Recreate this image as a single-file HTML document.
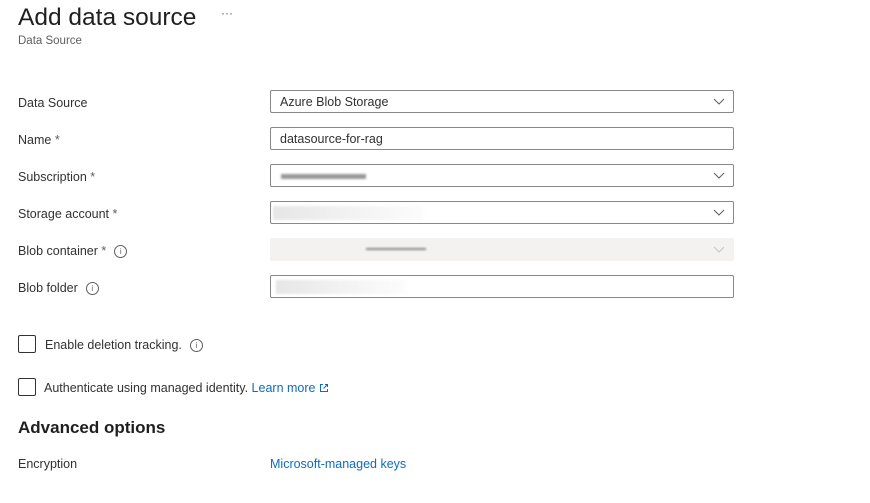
<!DOCTYPE html>
<html><head><meta charset="utf-8"><style>
body{margin:0;width:870px;height:503px;background:#fff;font-family:"Liberation Sans",sans-serif;color:#323130;position:relative;overflow:hidden}
.a{position:absolute;white-space:nowrap}
.lbl{font-size:12.5px;left:18px}
.box{position:absolute;left:270px;width:462px;height:21px;border:1px solid #8a8886;border-radius:2px;background:#fff}
.box span{position:absolute;left:9px;top:4px;font-size:12.5px}
.chev{position:absolute;right:8px;top:7px}
.info{display:inline-block;width:11px;height:11px;border:1px solid #605e5c;border-radius:50%;font-size:8px;text-align:center;line-height:11px;color:#605e5c;vertical-align:1px;margin-left:8px}
.cb{position:absolute;left:18px;width:16px;height:16px;border:1px solid #323130;border-radius:2px}
.blur{position:absolute;background:linear-gradient(90deg,#e6e6e6,#f2f2f2,#fcfcfc);filter:blur(1px)}
.st{color:#605e5c}
a{color:#0f6cbd;text-decoration:none}
</style></head><body>
<div class="a" style="left:18px;top:4px;font-size:24.5px;color:#201f1e">Add data source</div>
<div class="a" style="left:221px;top:6px;font-size:12px;color:#605e5c">···</div>
<div class="a" style="left:18px;top:35px;font-size:11.5px;color:#605e5c">Data Source</div>

<div class="a lbl" style="top:96px">Data Source</div>
<div class="box" style="top:90px"><span>Azure Blob Storage</span><svg class="chev" width="12" height="8"><path d="M1 1l5 5 5-5" fill="none" stroke="#605e5c"/></svg></div>
<div class="a lbl" style="top:133px">Name <span class="st">*</span></div>
<div class="box" style="top:127px"><span>datasource-for-rag</span></div>
<div class="a lbl" style="top:170px">Subscription <span class="st">*</span></div>
<div class="box" style="top:164px"><div class="blur" style="left:10px;top:9px;width:85px;height:5px;background:#999"></div><svg class="chev" width="12" height="8"><path d="M1 1l5 5 5-5" fill="none" stroke="#605e5c"/></svg></div>
<div class="a lbl" style="top:207px">Storage account <span class="st">*</span></div>
<div class="box" style="top:201px"><div class="blur" style="left:2px;top:4px;width:150px;height:14px"></div><svg class="chev" width="12" height="8"><path d="M1 1l5 5 5-5" fill="none" stroke="#605e5c"/></svg></div>
<div class="a lbl" style="top:244px">Blob container <span class="st">*</span><span class="info">i</span></div>
<div class="box" style="top:238px;border-color:#f3f2f1;background:#f3f2f1"><div class="blur" style="left:95px;top:9px;width:60px;height:2px;background:#888"></div><svg class="chev" width="12" height="8"><path d="M1 1l5 5 5-5" fill="none" stroke="#c8c6c4"/></svg></div>
<div class="a lbl" style="top:281px">Blob folder<span class="info">i</span></div>
<div class="box" style="top:275px"><div class="blur" style="left:5px;top:4px;width:130px;height:14px"></div></div>

<div class="cb" style="top:335px"></div>
<div class="a" style="left:45px;top:338px;font-size:12.5px">Enable deletion tracking.<span class="info" style="margin-left:8px">i</span></div>
<div class="cb" style="top:378px"></div>
<div class="a" style="left:44px;top:381px;font-size:12.5px">Authenticate using managed identity. <a>Learn more <svg width="10" height="10" style="vertical-align:-1px"><path d="M4 1.5H1.5v7h7V6M6 1.5h2.5V4M8.5 1.5L4.5 5.5" fill="none" stroke="#0f6cbd"/></svg></a></div>
<div class="a" style="left:18px;top:418px;font-size:17px;font-weight:bold;color:#201f1e">Advanced options</div>
<div class="a lbl" style="top:457px">Encryption</div>
<div class="a" style="left:270px;top:457px;font-size:12.5px"><a>Microsoft-managed keys</a></div>
</body></html>
